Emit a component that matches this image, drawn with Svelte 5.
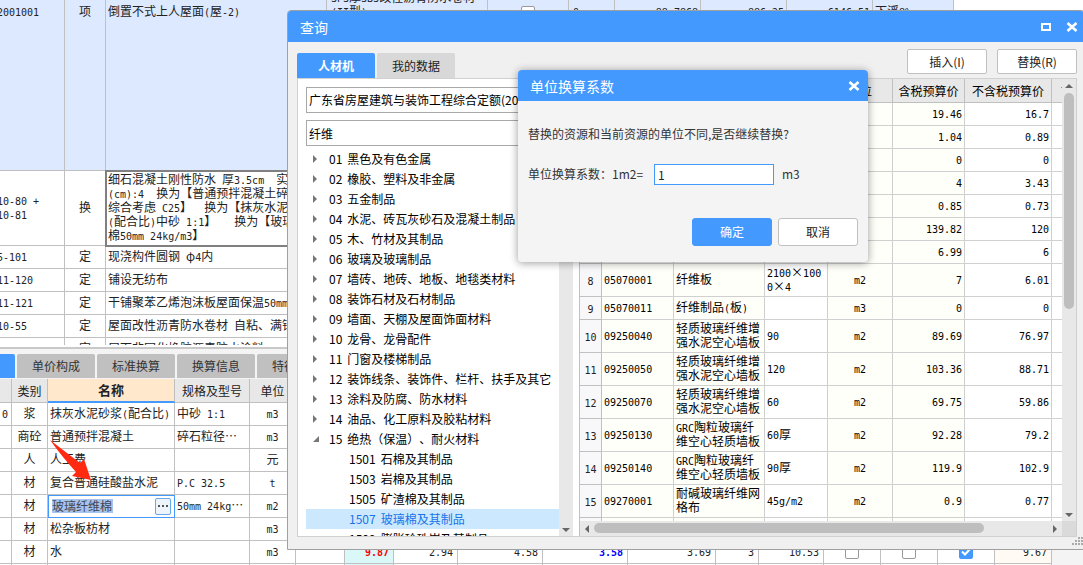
<script>
  const estimateRows = [
    { code: ['10-80 +', '10-81'], kind: '换', tall: true, name: ['细石混凝土刚性防水 厚3.5cm  实', '(cm):4  换为【普通预拌混凝土碎', '综合考虑 C25】  换为【抹灰水泥', '(配合比)中砂 1:1】   换为【玻璃', '棉50mm 24kg/m3】'] },
    { code: ['5-101'], kind: '定', name: ['现浇构件圆钢 φ4内'] },
    { code: ['11-120'], kind: '定', name: ['铺设无纺布'] },
    { code: ['11-121'], kind: '定', name: ['干铺聚苯乙烯泡沫板屋面保温50mm'] },
    { code: ['10-55'], kind: '定', name: ['屋面改性沥青防水卷材 自粘、满铺'] },
    { code: ['10-51'], kind: '定', name: ['屋面非固化橡胶沥青防水涂料 2'] }
  ];

  const paneTabs = ['单价构成', '标准换算', '换算信息', '特征及内容'];

  const materials = [
    { no: '0', kind: '浆', name: '抹灰水泥砂浆(配合比)', spec: '中砂 1:1', unit: 'm3' },
    { no: '', kind: '商砼', name: '普通预拌混凝土', spec: '碎石粒径⋯', unit: 'm3' },
    { no: '', kind: '人', name: '人工费', spec: '', unit: '元' },
    { no: '', kind: '材', name: '复合普通硅酸盐水泥', spec: 'P.C 32.5', unit: 't' },
    { no: '', kind: '材', name: '玻璃纤维棉', spec: '50mm 24kg⋯', unit: 'm2', editing: true },
    { no: '', kind: '材', name: '松杂板枋材', spec: '', unit: 'm3' },
    { no: '', kind: '材', name: '水', spec: '', unit: 'm3', values: ['9.87', '2.94', '4.58', '3.58', '3.69', '3', '10.53'] },
    { no: '', kind: '', name: '', spec: '', unit: '' }
  ];

  const tree = [
    ['01', '黑色及有色金属'], ['02', '橡胶、塑料及非金属'], ['03', '五金制品'], ['04', '水泥、砖瓦灰砂石及混凝土制品'],
    ['05', '木、竹材及其制品'], ['06', '玻璃及玻璃制品'], ['07', '墙砖、地砖、地板、地毯类材料'], ['08', '装饰石材及石材制品'],
    ['09', '墙面、天棚及屋面饰面材料'], ['10', '龙骨、龙骨配件'], ['11', '门窗及楼梯制品'], ['12', '装饰线条、装饰件、栏杆、扶手及其它'],
    ['13', '涂料及防腐、防水材料'], ['14', '油品、化工原料及胶粘材料'], ['15', '绝热（保温）、耐火材料']
  ];
  const children = [['1501', '石棉及其制品'], ['1503', '岩棉及其制品'], ['1505', '矿渣棉及其制品'], ['1507', '玻璃棉及其制品'], ['1509', '膨胀珍珠岩及其制品']];

  const results = [
    { gross: '19.46', net: '16.7' },
    { gross: '1.04', net: '0.89' },
    { gross: '0', net: '0' },
    { gross: '4', net: '3.43' },
    { gross: '0.85', net: '0.73' },
    { gross: '139.82', net: '120' },
    { gross: '6.99', net: '6' },
    { no: 8, code: '05070001', name: ['纤维板'], spec: ['2100×100', '0×4'], unit: 'm2', gross: '7', net: '6.01', tall: true },
    { no: 9, code: '05070011', name: ['纤维制品(板)'], spec: [], unit: 'm3', gross: '0', net: '0' },
    { no: 10, code: '09250040', name: ['轻质玻璃纤维增', '强水泥空心墙板'], spec: ['90'], unit: 'm2', gross: '89.69', net: '76.97', tall: true },
    { no: 11, code: '09250050', name: ['轻质玻璃纤维增', '强水泥空心墙板'], spec: ['120'], unit: 'm2', gross: '103.36', net: '88.71', tall: true },
    { no: 12, code: '09250070', name: ['轻质玻璃纤维增', '强水泥空心墙板'], spec: ['60'], unit: 'm2', gross: '69.75', net: '59.86', tall: true },
    { no: 13, code: '09250130', name: ['GRC陶粒玻璃纤', '维空心轻质墙板'], spec: ['60厚'], unit: 'm2', gross: '92.28', net: '79.2', tall: true },
    { no: 14, code: '09250140', name: ['GRC陶粒玻璃纤', '维空心轻质墙板'], spec: ['90厚'], unit: 'm2', gross: '119.9', net: '102.9', tall: true },
    { no: 15, code: '09270001', name: ['耐碱玻璃纤维网', '格布'], spec: ['45g/m2'], unit: 'm2', gross: '0.9', net: '0.77', tall: true },
    { gross: '', net: '' }
  ];

  let factor = $state('1');
  let keyword = $state('纤维');
  let editName = $state('玻璃纤维棉');

  // Latin runs are set in a half-width face so they align with the full-width characters.
  const runs = (text) => String(text ?? '').match(/[\x20-\x7e]+|⋯|[^\x20-\x7e⋯]+/g) ?? [];
  const isLatin = (run) => run.charCodeAt(0) < 127;
</script>

{#snippet mix(text)}{#each runs(text) as run}{#if isLatin(run)}<span class="lat">{run}</span>{:else if run === '⋯'}<span class="more">{run}</span>{:else}{run}{/if}{/each}{/snippet}
{#snippet lines(list)}{#each list ?? [] as line}<div>{@render mix(line)}</div>{/each}{/snippet}
{#snippet cross()}<svg width="12" height="10" viewBox="0 0 12 10" aria-hidden="true"><path d="M1.5 1 L10.5 9 M10.5 1 L1.5 9" stroke="#fff" stroke-width="2.6" fill="none" /></svg>{/snippet}

<div class="page" lang="zh-CN">
  <section class="estimate">
    <table class="grid main-grid">
      <colgroup>
        <col style:width="73px" /><col style:width="41px" /><col style:width="221px" /><col style:width="161px" /><col style:width="81px" />
        <col style:width="46px" /><col style:width="86px" /><col style:width="86px" /><col style:width="86px" /><col style:width="81px" />
      </colgroup>
      <tbody>
        <tr class="group">
          <td>{@render mix('2001001')}</td>
          <td class="mid">项</td>
          <td>{@render mix('倒置不式上人屋面(屋-2)')}</td>
          <td class="feature"><div class="tail">{@render lines(['SPS厚SBS改性沥青防水卷材', '(II型)'])}</div></td>
          <td class="mid"><input type="checkbox" aria-label="锁定综合单价" /></td>
          <td class="qty">{@render mix('0')}</td>
          <td class="num">{@render mix('88.7868')}</td>
          <td class="num">{@render mix('886.25')}</td>
          <td class="num">{@render mix('6146.51')}</td>
          <td>{@render mix('下浮8%')}</td>
        </tr>
        {#each estimateRows as row}
          <tr class:tall={row.tall}>
            <td>{@render lines(row.code)}</td>
            <td class="mid">{row.kind}</td>
            <td class:current={row.tall}>{@render lines(row.name)}</td>
            <td></td><td></td><td></td><td></td><td></td><td></td><td></td>
          </tr>
        {/each}
      </tbody>
    </table>
  </section>

  <section class="detail">
    <nav class="pane-tabs">
      <button class="first" aria-label="工料机显示"></button>
      {#each paneTabs as tab}<button>{tab}</button>{/each}
    </nav>
    <table class="grid material-grid">
      <colgroup>
        {#each [12, 36, 127, 75, 46, 49, 49, 64, 85, 85, 88, 43, 65, 57, 57, 57, 57] as w}<col style:width="{w}px" />{/each}
      </colgroup>
      <thead>
        <tr>
          <th></th><th>类别</th><th class="active">名称</th><th>规格及型号</th><th>单位</th>
          {#each Array(12) as _}<th></th>{/each}
        </tr>
      </thead>
      <tbody>
        {#each materials as m}
          <tr>
            <td class="num">{@render mix(m.no)}</td>
            <td class="mid">{m.kind}</td>
            {#if m.editing}
              <td class="editor"><div><input bind:value={editName} aria-label="名称" /><button aria-label="选择"><i></i><i></i><i></i></button></div></td>
            {:else}
              <td>{@render mix(m.name)}</td>
            {/if}
            <td>{@render mix(m.spec)}</td>
            <td class="mid">{@render mix(m.unit)}</td>
            <td></td>
            {#each Array(7) as _, i}
              <td class="num" class:red={i === 0} class:blue={i === 3}>{@render mix(m.values?.[i])}</td>
            {/each}
            {#each [false, false, true] as on}
              <td class="mid">{#if m.values}<input type="checkbox" checked={on} aria-label="是否计价" />{/if}</td>
            {/each}
            <td class="num warm">{#if m.values}{@render mix('9.67')}{/if}</td>
          </tr>
        {/each}
      </tbody>
    </table>
  </section>

  <svg class="pointer" width="46" height="46" viewBox="0 0 46 46" aria-hidden="true">
    <path d="M1 1 L31 24 L35 20 L42 41 L23 37 L27 33 Q14 19 1 1 Z" fill="#ff2a10" />
  </svg>

  <div class="window" role="dialog" aria-label="查询">
    <header>
      <h1>查询</h1>
      <button aria-label="最大化"><svg width="12" height="10" viewBox="0 0 12 10" aria-hidden="true"><rect x="2" y="2" width="8" height="6" stroke="#fff" stroke-width="2" fill="none" /></svg></button>
      <button aria-label="关闭">{@render cross()}</button>
    </header>
    <div class="toolbar">
      <nav><button class="on">人材机</button><button>我的数据</button></nav>
      <div class="actions"><button>插入(I)</button><button>替换(R)</button></div>
    </div>
    <div class="content">
      <div class="side">
        <select aria-label="定额库"><option>广东省房屋建筑与装饰工程综合定额(2018)</option></select>
        <input class="search" bind:value={keyword} aria-label="搜索" />
        <div class="tree">
          <ul>
            {#each tree as [code, title], i}
              <li>
                <svg width="8" height="8" viewBox="0 0 8 8" aria-hidden="true">{#if i === 14}<path d="M7 1 V7 H1 Z" fill="#777" />{:else}<path d="M1 0 L5 4 L1 8 Z" fill="#777" />{/if}</svg>
                <span class="no">{code}</span><span>{title}</span>
              </li>
            {/each}
            {#each children as [code, title], i}
              <li class="child" class:selected={i === 3}><span class="no">{code}</span><span>{title}</span></li>
            {/each}
          </ul>
          <div class="vbar"><span></span><svg width="8" height="4" viewBox="0 0 8 4" aria-hidden="true"><path d="M0 0 H8 L4 4 Z" fill="#666" /></svg></div>
        </div>
      </div>
      <div class="results">
        <div class="scroll">
          <table class="grid result-grid">
            <colgroup>
              {#each [22, 72, 91, 63, 65, 72, 87, 57] as w}<col style:width="{w}px" />{/each}
            </colgroup>
            <thead>
              <tr><th></th><th>编码</th><th>名称</th><th>规格</th><th>单位</th><th>含税预算价</th><th>不含税预算价</th><th>市场价</th></tr>
            </thead>
            <tbody>
              {#each results as r}
                <tr class:double={r.tall}>
                  <td class="index">{@render mix(r.no)}</td>
                  <td class="cream">{@render mix(r.code)}</td>
                  <td class="cream">{@render lines(r.name)}</td>
                  <td>{@render lines(r.spec)}</td>
                  <td class="cream mid">{@render mix(r.unit)}</td>
                  <td class="cream num">{@render mix(r.gross)}</td>
                  <td class="num">{@render mix(r.net)}</td>
                  <td></td>
                </tr>
              {/each}
            </tbody>
          </table>
        </div>
        <div class="vbar">
          <svg width="8" height="4" viewBox="0 0 8 4" aria-hidden="true"><path d="M0 4 H8 L4 0 Z" fill="#666" /></svg>
          <div class="track"><div class="thumb"></div></div>
          <svg width="8" height="4" viewBox="0 0 8 4" aria-hidden="true"><path d="M0 0 H8 L4 4 Z" fill="#666" /></svg>
        </div>
        <div class="hbar">
          <svg width="4" height="8" viewBox="0 0 4 8" aria-hidden="true"><path d="M4 0 V8 L0 4 Z" fill="#666" /></svg>
          <div class="track"><div class="thumb"></div></div>
          <svg width="4" height="8" viewBox="0 0 4 8" aria-hidden="true"><path d="M0 0 V8 L4 4 Z" fill="#666" /></svg>
        </div>
        <div class="corner"></div>
      </div>
    </div>
    <svg class="grip" width="11" height="11" viewBox="0 0 11 11" aria-hidden="true">
      <path d="M6 0h2v2h-2z M3 3h2v2h-2z M6 3h2v2h-2z M0 6h2v2h-2z M3 6h2v2h-2z M6 6h2v2h-2z M9 0h2v2h-2z M9 3h2v2h-2z M9 6h2v2h-2z" fill="#aaa" />
    </svg>
  </div>

  <div class="modal" role="dialog" aria-label="单位换算系数">
    <header>
      <h2>单位换算系数</h2>
      <button aria-label="关闭">{@render cross()}</button>
    </header>
    <p>替换的资源和当前资源的单位不同,是否继续替换?</p>
    <div class="field">
      <label for="factor">单位换算系数：1m2=</label>
      <input id="factor" bind:value={factor} />
      <span>m3</span>
    </div>
    <footer><button class="primary">确定</button><button>取消</button></footer>
  </div>
</div>

<style>
  :global(body) { margin: 0; }
  .page, .page * { box-sizing: border-box; }
  .page {
    position: relative;
    height: 100vh;
    overflow: hidden;
    display: grid;
    grid-template-rows: minmax(0, 345fr) minmax(0, 220fr);
    background: #fff;
    color: #222;
    font: 12px/14px "Noto Sans CJK SC", sans-serif;
    text-spacing-trim: space-all;
  }
  button, input, select { font: inherit; color: inherit; margin: 0; padding: 0; border-radius: 0; outline: none; }
  button { border: 0; background: none; }
  h1, h2, p, ul { margin: 0; padding: 0; font-weight: 400; }
  svg { display: block; flex: none; }

  .lat { font-family: "DejaVu Sans Mono", monospace; font-size: 10px; line-height: 0; }
  .more { display: inline-block; }

  .grid { table-layout: fixed; border-collapse: separate; border-spacing: 0; width: 0; }
  .grid td, .grid th {
    height: 23px;
    padding: 0 2px 2px;
    border: solid #c0c0c0;
    border-width: 0 1px 1px 0;
    overflow: hidden;
    white-space: pre;
    text-align: left;
    font-weight: 400;
  }
  .grid th { height: 24px; padding: 0; background: #e8e8e8; text-align: center; }
  .grid .mid { text-align: center; }
  .grid .num { text-align: right; }
  .grid td div { height: 14px; }

  .estimate { overflow: hidden; }
  .main-grid { margin-left: -8px; }
  .main-grid td:first-child { padding-left: 5px; }
  .main-grid .group td { height: 171px; padding-top: 4px; vertical-align: top; background: #dde9ff; }
  .main-grid .group .feature { padding-top: 0; padding-left: 4px; }
  .main-grid .group .qty { padding-left: 4px; }
  .main-grid .group .tail { height: 18px; display: flex; flex-direction: column; justify-content: flex-end; }
  .tail div { flex: none; }
  .main-grid .tall td { height: 75px; }
  .main-grid .current { outline: 2px solid #808080; outline-offset: -1px; }

  input[type="checkbox"] {
    appearance: none;
    display: inline-block;
    width: 14px;
    height: 14px;
    border: 1px solid #999;
    border-radius: 2px;
    background: #fff;
    vertical-align: middle;
  }
  input[type="checkbox"]:checked {
    border-color: #4499ff;
    background: #4499ff url("data:image/svg+xml,%3Csvg xmlns='http://www.w3.org/2000/svg' viewBox='0 0 12 12'%3E%3Cpath d='M2 5.5 5 8.500 10 3' fill='none' stroke='white' stroke-width='2'/%3E%3C/svg%3E");
  }

  .detail { overflow: hidden; margin-top: 2px; border-top: 2px solid #c8c8c8; background: #f4f4f4; }
  .pane-tabs { display: flex; gap: 2px; padding: 5px 0 1px; }
  .pane-tabs button { flex: none; height: 24px; padding: 0 15px; background: #c0c0c0; color: #333; border-radius: 2px 2px 0 0; }
  .pane-tabs .first { width: 15px; padding: 0; background: #4499ff; border-radius: 0 2px 0 0; }
  .material-grid { background: #fff; }
  .material-grid .active { background: #ffe8cc; border-bottom: 2px solid #4499ff; font-size: 13px; font-weight: 700; }
  .material-grid .num { padding-right: 4px; }
  .material-grid .red { background: #dbf8f8; color: #f00; font-weight: 700; }
  .material-grid .blue { color: #00f; font-weight: 700; }
  .material-grid .warm { background: #fffaf4; }
  .material-grid .editor { padding: 0; outline: 1px solid #4499ff; outline-offset: -1px; }
  .material-grid .editor div { display: flex; align-items: center; justify-content: space-between; height: 17px; padding: 0 3px 0 4px; }
  .editor input { width: 61px; height: 14px; border: 0; background: #a5c4ee; color: #445; }
  .editor button { width: 16px; height: 17px; display: flex; gap: 2px; align-items: center; justify-content: center; border: 1px solid #66a8ea; border-radius: 2px; background: #eef4fb; }
  .editor i { width: 2px; height: 2px; background: #555; }

  .pointer { position: absolute; left: 49px; top: 439px; }

  .window {
    position: absolute;
    left: 287px;
    right: -2px;
    top: 10px;
    bottom: 15px;
    display: flex;
    flex-direction: column;
    padding-bottom: 12px;
    border: 1px solid #a0a0a0;
    border-radius: 4px 4px 0 0;
    background: #f0f0f0;
    color: #000;
  }
  .window header { display: flex; align-items: center; gap: 14px; height: 31px; padding: 0 6px 0 12px; background: #4499ff; border-radius: 3px 3px 0 0; }
  h1, h2 { flex: 1; color: #fff; font-size: 14px; line-height: 20px; }
  .toolbar { display: flex; align-items: flex-end; justify-content: space-between; height: 36px; padding: 0 7px 0 9px; color: #222; }
  .toolbar nav { display: flex; gap: 2px; }
  .toolbar nav button { width: 78px; height: 25px; background: #d8d8d8; border-radius: 2px 2px 0 0; }
  .toolbar nav .on { background: #4499ff; color: #fff; font-weight: 700; }
  .actions { display: flex; gap: 10px; align-self: flex-start; padding-top: 7px; }
  .actions button { width: 80px; height: 25px; border: 1px solid #c0c0c0; border-radius: 2px; background: #fff; }
  .content { flex: 1; min-height: 0; display: grid; grid-template-columns: 275px minmax(0, 1fr); gap: 6px; margin: 0 7px 0 9px; border: 1px solid #d0d0d0; background: #fff; }
  .side { display: flex; flex-direction: column; min-height: 0; padding: 8px 0 0 8px; }
  select, .search { appearance: none; width: 100%; height: 26px; padding: 0 2px; border: 1px solid #a8a8a8; background: #fff; flex: none; }
  .search { margin-top: 7px; }
  .tree { flex: 1; min-height: 0; display: flex; margin-top: 3px; }
  .tree ul { flex: 1; min-width: 0; overflow: hidden; list-style: none; }
  .tree li { display: flex; align-items: center; height: 20px; padding-left: 6px; white-space: nowrap; }
  .tree li svg { margin-right: 9px; }
  .tree .no { margin-right: 5px; }
  .tree .child { padding-left: 43px; }
  .tree .selected { background: #cce8ff; color: #1a73e8; }
  .vbar { display: flex; flex-direction: column; align-items: center; width: 14px; padding: 5px 0 4px; background: #e8e8e8; }
  .vbar span { flex: 1; }

  .results { min-height: 0; display: grid; grid-template-columns: minmax(0, 1fr) 14px; grid-template-rows: minmax(0, 1fr) 15px; border-left: 1px solid #c0c0c0; }
  .scroll { overflow: hidden; }
  .result-grid td { border-color: #d0d0d0; }
  .result-grid .double td { height: 33px; }
  .result-grid .index { background: #f8f8fa; text-align: center; color: #222; border-color: #c0c0c0; padding: 0; }
  .result-grid .cream { background: #fffffa; }
  .result-grid th:last-child { text-align: left; padding-left: 9px; }
  .track { flex: 1; align-self: stretch; display: flex; }
  .thumb { background: #bebebe; border-radius: 5px; }
  .vbar .track { margin: 5px 2px; }
  .vbar .thumb { width: 10px; height: 52%; }
  .hbar { display: flex; align-items: center; background: #e8e8e8; padding: 0 5px; }
  .hbar .track { margin: 2px 5px; }
  .hbar .thumb { width: 86%; height: 10px; }
  .corner { background: #dadada; }
  .grip { position: absolute; right: 1px; bottom: 1px; }

  .modal {
    position: absolute;
    left: 518px;
    top: 70px;
    width: 350px;
    border-radius: 4px;
    background: #f4f4f4;
    color: #333;
    box-shadow: 0 1px 8px rgba(0, 0, 0, 0.4);
  }
  .modal header { display: flex; align-items: center; height: 31px; padding: 0 8px 0 12px; background: #4499ff; border-radius: 4px 4px 0 0; }
  .modal p { padding: 26px 10px 22px; }
  .field { display: flex; align-items: center; padding: 0 10px; height: 22px; }
  .field label { width: 126px; white-space: nowrap; }
  .field input { width: 120px; height: 21px; padding: 0 3px; border: 1px solid #4499ff; background: #fff; color: #222; }
  .field span { padding-left: 8px; }
  .modal footer { display: flex; justify-content: flex-end; gap: 6px; padding: 33px 10px 16px; }
  .modal footer button { width: 80px; height: 28px; border: 1px solid #c0c0c0; border-radius: 3px; background: #fff; color: #222; }
  .modal footer .primary { border-color: #4499ff; background: #4499ff; color: #fff; }
</style>
